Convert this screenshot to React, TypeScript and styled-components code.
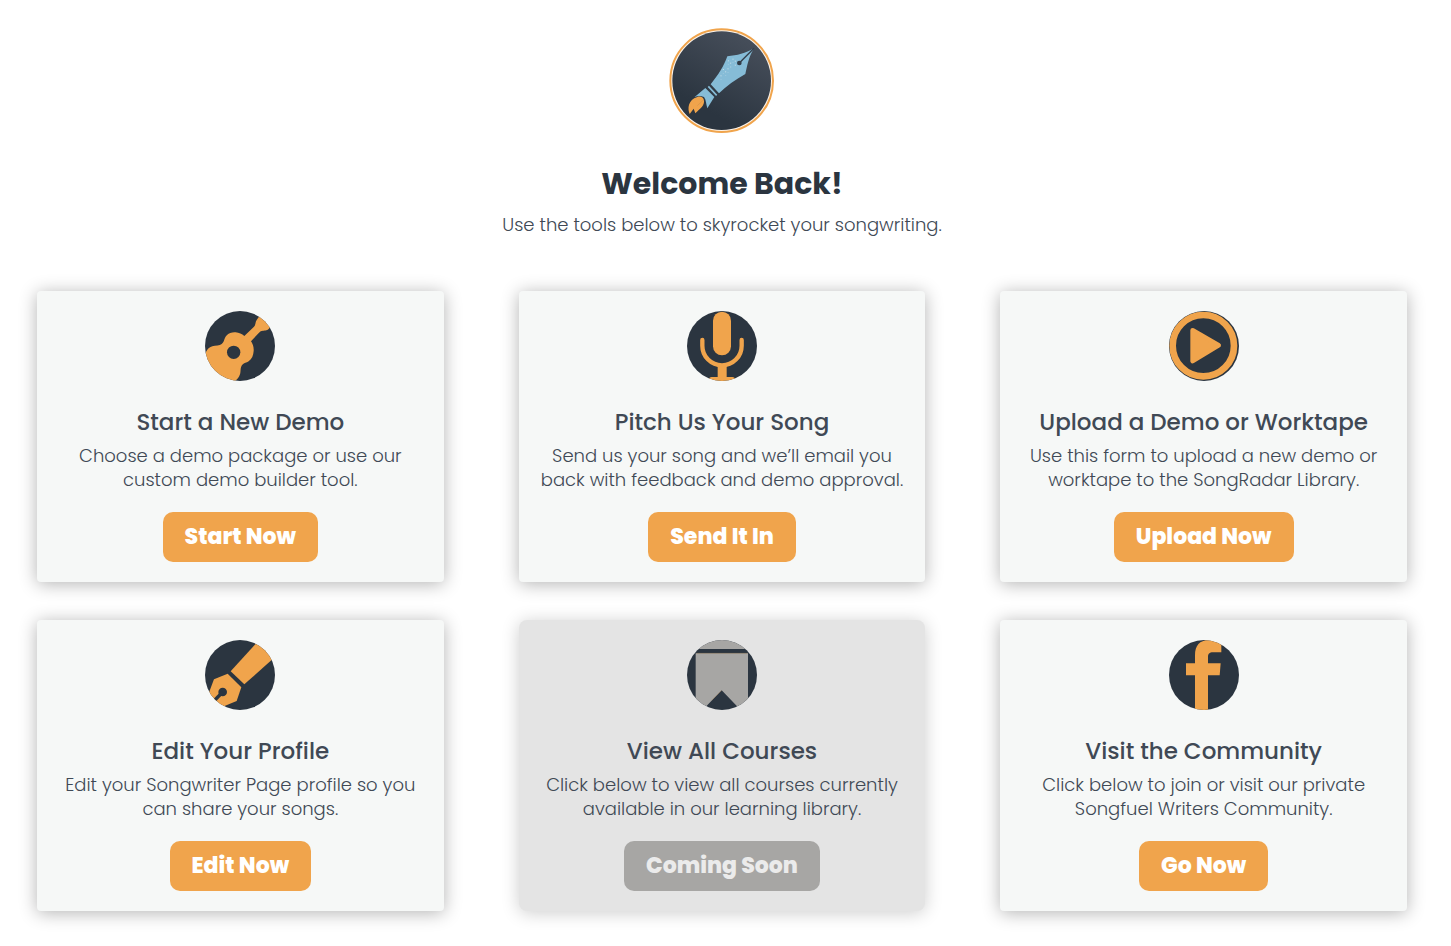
import React from "react";
import styled, { createGlobalStyle } from "styled-components";

const navy = "#2b3540";
const slate = "#404955";
const orange = "#f0a44c";
const muted = "#a7a6a4";

const GlobalStyle = createGlobalStyle`
  *, *::before, *::after { box-sizing: border-box; }
  body {
    margin: 0;
    background: #ffffff;
    color: ${slate};
    font-family: Poppins, Inter, "Open Sans", sans-serif;
  }
`;

const Page = styled.main`
  padding: 28px 44px 35px 37px;
`;

const Header = styled.header`
  display: flex;
  flex-direction: column;
  align-items: center;
  margin-bottom: 54px;
  text-align: center;
`;

const Logo = styled.svg`
  display: block;
  width: 106px;
  height: 106px;
  margin-bottom: 32px;
`;

const Heading = styled.h1`
  margin: 0 0 11px;
  color: ${navy};
  font-size: 30px;
  font-weight: 700;
  line-height: 36px;
`;

const Copy = styled.p`
  margin: 0;
  font-size: 18px;
  font-weight: 300;
  line-height: 24px;
`;

const Tools = styled.section`
  display: grid;
  grid-template-columns: repeat(3, minmax(0, 1fr));
  gap: 38px 75px;
`;

const Card = styled.article<{ $muted?: boolean }>`
  display: flex;
  flex-direction: column;
  align-items: center;
  padding: 20px;
  border-radius: ${(p) => (p.$muted ? 8 : 4)}px;
  background: ${(p) => (p.$muted ? "#e4e4e4" : "#f6f8f7")};
  box-shadow: 0 2px 18px rgba(0, 0, 0, ${(p) => (p.$muted ? 0.2 : 0.3)});
  text-align: center;
`;

const Icon = styled.svg`
  display: block;
  width: 70px;
  height: 70px;
  margin-bottom: 26px;
  border-radius: 50%;
  background: ${navy};
`;

const CardTitle = styled.h2`
  margin: 0 0 7px;
  font-size: 23px;
  font-weight: 500;
  line-height: 30px;
`;

const CardCopy = styled(Copy)`
  margin-bottom: 20px;
`;

const Action = styled.button`
  height: 50px;
  padding: 0 22px;
  border: 0;
  border-radius: 10px;
  background: ${orange};
  color: #ffffff;
  font-family: inherit;
  font-size: 22px;
  font-weight: 800;
  line-height: 28px;
  cursor: pointer;

  &:disabled {
    background: ${muted};
    color: #ebebeb;
    cursor: default;
  }
`;

const GuitarIcon = () => (
  <Icon viewBox="0 0 210 210" aria-hidden="true">
    <path
      fill={orange}
      d="M0 130C5 116 12 109 22 106C32 103 44 104 50 99C59 91 57 81 64 74C72 65 84 63 92 64C102 65 111 69 118 75L147 47C153 41 150 34 155 27L164 14L178 4L205 44L194 50C188 59 180 58 174 59C168 59 166 61 162 65L138 91C143 99 147 108 146 120C145 133 141 144 131 151C124 156 118 155 112 161C105 169 108 180 105 190C102 199 96 206 88 212H0Z"
    />
    <circle cx="86" cy="124" r="20" fill={navy} />
  </Icon>
);

const MicIcon = () => (
  <Icon viewBox="0 0 210 210" aria-hidden="true">
    <rect x="78" y="2" width="54" height="131" rx="27" fill={orange} />
    <path d="M46 87V104A59 59 0 0 0 164 104V87" fill="none" stroke={orange} strokeWidth="13" strokeLinecap="round" />
    <rect x="92" y="160" width="27" height="44" fill={orange} />
    <rect x="66" y="198" width="78" height="20" rx="8" fill={orange} />
  </Icon>
);

const PlayIcon = () => (
  <Icon viewBox="0 0 210 210" aria-hidden="true">
    <circle cx="103" cy="104" r="92" fill="none" stroke={orange} strokeWidth="20" />
    <path d="M71 58L149 103L71 150Z" fill={orange} stroke={orange} strokeWidth="14" strokeLinejoin="round" />
  </Icon>
);

const PenIcon = () => (
  <Icon viewBox="0 0 210 210" aria-hidden="true">
    <path d="M77 94L162 1L209 52L118 133Z" fill={orange} />
    <path d="M68 101L109 142L95 183L46 203L8 168L27 118Z" fill={orange} />
    <circle cx="53" cy="156" r="13" fill={navy} />
    <path d="M53 156L24 186" stroke={navy} strokeWidth="10" />
  </Icon>
);

const BookmarkIcon = () => (
  <Icon viewBox="0 0 210 210" aria-hidden="true">
    <rect width="210" height="27" fill={muted} />
    <path d="M26 40H183V210H161L104 151L47 210H26Z" fill={muted} />
    <path d="M28 40H182M74 181L104 151" fill="none" stroke="#b98c54" strokeWidth="1" />
  </Icon>
);

const FacebookIcon = () => (
  <Icon viewBox="0 0 210 210" aria-hidden="true">
    <path
      fill={orange}
      d="M78 210V106H51V70H78V46C78 16 92 1 119 0C133 0 145 3 157 10V37H132C121 37 117 42 117 51V70H155L152 106H117V210Z"
    />
  </Icon>
);

const RocketLogo = () => (
  <Logo viewBox="27 24 318 318" role="img" aria-label="Rocket pen logo">
    <defs>
      <linearGradient id="sky" x1="0.75" y1="0.1" x2="0.35" y2="0.8">
        <stop offset="0" stopColor="#454d59" />
        <stop offset="1" stopColor="#2b3540" />
      </linearGradient>
    </defs>
    <circle cx="185" cy="182" r="154" fill="#fbf3ea" stroke={orange} strokeWidth="6" />
    <circle cx="185" cy="182" r="148" fill="url(#sky)" />
    <path d="M282 85C256 101 232 106 202 109C191 140 176 163 152 193L177 220C200 197 225 180 256 162C262 137 265 113 282 85Z" fill="#86bcd7" />
    <path d="M238 129L282 85" stroke="#333d49" strokeWidth="4" />
    <circle cx="238" cy="129" r="7" fill="#333d49" />
    <path d="M145 199L170 226" stroke="#86bcd7" strokeWidth="5" />
    <path d="M136 204L103 232C113 227 122 227 132 231C139 241 138 253 142 265L163 231Z" fill="#86bcd7" />
    <path d="M112 231C121 228 128 231 131 238C137 256 119 267 106 280L101 266L89 282C82 266 84 239 112 231Z" fill={orange} />
    <path d="M129 241L112 257" stroke="#7a674e" strokeWidth="1" strokeDasharray="2 2" />
    <path
      d="M205 121V134M212 128V142M219 116V129M190 147V160M197 154V167M204 145V158M183 166V179M226 122V137"
      stroke="#cbe0ea"
      strokeWidth="3"
      strokeDasharray="3 9"
    />
  </Logo>
);

type Tool = {
  title: string;
  copy: string;
  action: string;
  icon: () => React.ReactElement;
  soon?: boolean;
};

const tools: Tool[] = [
  { title: "Start a New Demo", copy: "Choose a demo package or use our custom demo builder tool.", action: "Start Now", icon: GuitarIcon },
  { title: "Pitch Us Your Song", copy: "Send us your song and we’ll email you back with feedback and demo approval.", action: "Send It In", icon: MicIcon },
  { title: "Upload a Demo or Worktape", copy: "Use this form to upload a new demo or worktape to the SongRadar Library.", action: "Upload Now", icon: PlayIcon },
  { title: "Edit Your Profile", copy: "Edit your Songwriter Page profile so you can share your songs.", action: "Edit Now", icon: PenIcon },
  { title: "View All Courses", copy: "Click below to view all courses currently available in our learning library.", action: "Coming Soon", icon: BookmarkIcon, soon: true },
  { title: "Visit the Community", copy: "Click below to join or visit our private Songfuel Writers Community.", action: "Go Now", icon: FacebookIcon },
];

export default function App() {
  return (
    <>
      <GlobalStyle />
      <Page>
        <Header>
          <RocketLogo />
          <Heading>Welcome Back!</Heading>
          <Copy>Use the tools below to skyrocket your songwriting.</Copy>
        </Header>
        <Tools>
          {tools.map(({ title, copy, action, icon: ToolIcon, soon }) => (
            <Card key={title} $muted={soon}>
              <ToolIcon />
              <CardTitle>{title}</CardTitle>
              <CardCopy>{copy}</CardCopy>
              <Action type="button" disabled={soon}>
                {action}
              </Action>
            </Card>
          ))}
        </Tools>
      </Page>
    </>
  );
}
